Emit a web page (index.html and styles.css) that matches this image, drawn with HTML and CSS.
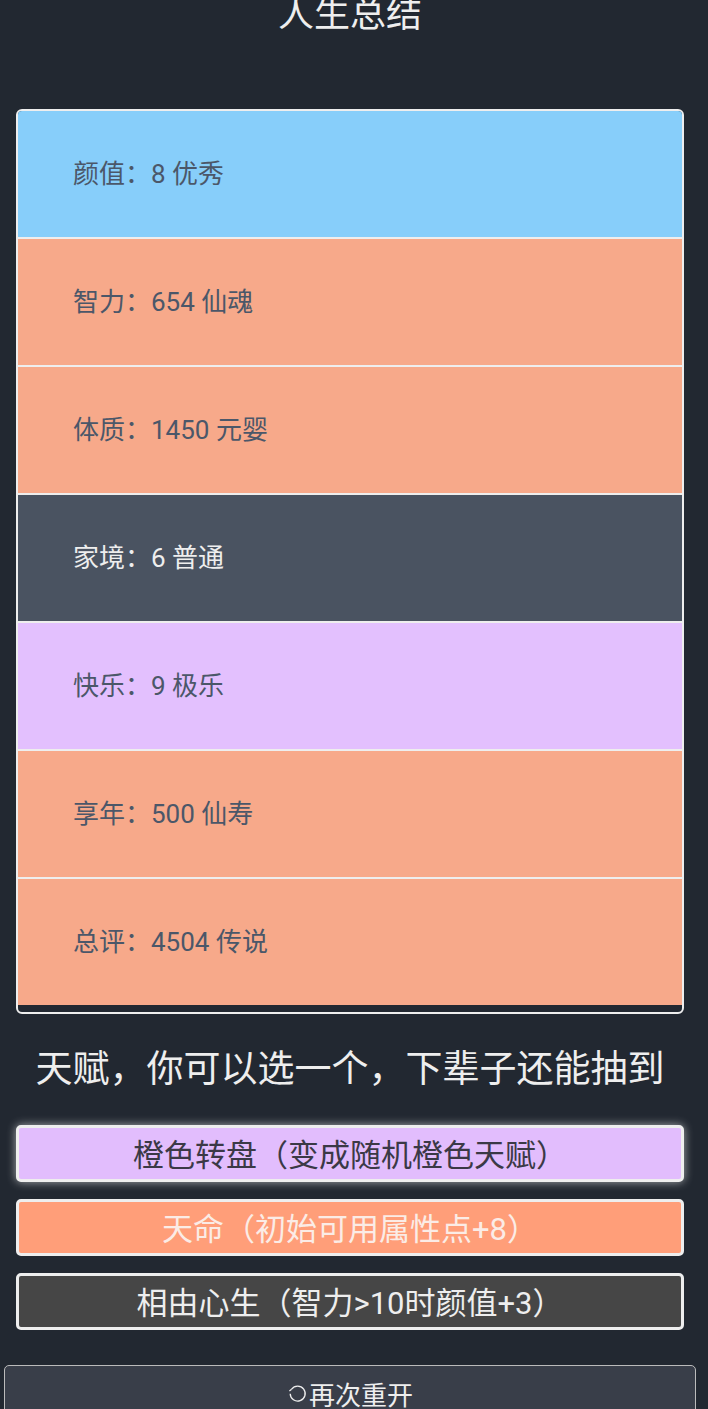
FILE: index.html
```html
<!DOCTYPE html>
<html lang="zh-CN">
<head>
    <meta charset="UTF-8">
    <meta name="viewport" content="width=device-width, initial-scale=1.0">
    <title>人生重开模拟器</title>
    <link rel="stylesheet" href="styles.css">
</head>
<body>
    <div class="page">
        <div class="title">人生总结</div>
        <ul class="summary">
            <li class="grade-blue">颜值：8 优秀</li>
            <li class="grade-orange">智力：654 仙魂</li>
            <li class="grade-orange">体质：1450 元婴</li>
            <li class="grade-gray">家境：6 普通</li>
            <li class="grade-purple">快乐：9 极乐</li>
            <li class="grade-orange">享年：500 仙寿</li>
            <li class="grade-orange">总评：4504 传说</li>
        </ul>
        <div class="talent-head">天赋，你可以选一个，下辈子还能抽到</div>
        <ul class="talents">
            <li class="talent talent-purple selected">橙色转盘（变成随机橙色天赋）</li>
            <li class="talent talent-orange">天命（初始可用属性点+8）</li>
            <li class="talent talent-gray">相由心生（智力&gt;10时颜值+3）</li>
        </ul>
        <button class="restart">
            <svg class="restart-icon" viewBox="0 0 20 20" width="20" height="20">
                <path d="M4.6 6.2 A7.5 7.5 0 1 1 3.2 10.8" fill="none" stroke="#eee" stroke-width="1.3"/>
                <path d="M4.6 6.2 L2.4 8" fill="none" stroke="#eee" stroke-width="1.2"/>
            </svg>再次重开
        </button>
    </div>
</body>
</html>
```

FILE: styles.css
```css
:root {
    --bg: #222831;
    --light: #eeeeee;
    --row-text: #4b5769;
    --blue: #87cefa;
    --orange: #f7a98a;
    --gray: #4a5361;
    --purple: #e3c0fe;
}
html, body {
    margin: 0;
    padding: 0;
    background: var(--bg);
    color: var(--light);
    font-family: Roboto, "Noto Sans CJK SC", sans-serif;
}
.page {
    width: 700px;
    overflow: hidden;
}
.title {
    margin-top: -5px;
    font-size: 36px;
    line-height: 40px;
    text-align: center;
}
.summary {
    list-style: none;
    margin: 74px 16px 0 16px;
    padding: 0 0 7px 0;
    border: 2px solid var(--light);
    border-radius: 6px;
    overflow: hidden;
}
.summary li {
    height: 126px;
    box-sizing: border-box;
    display: flex;
    align-items: center;
    padding: 0 0 5px 55px;
    font-size: 26px;
    color: var(--row-text);
}
.summary li + li {
    height: 128px;
    border-top: 2px solid var(--light);
}
.grade-blue { background: var(--blue); }
.grade-orange { background: var(--orange); }
.grade-gray { background: var(--gray); color: var(--light) !important; }
.grade-purple { background: var(--purple); }
.talent-head {
    margin-top: 31px;
    font-size: 37px;
    line-height: 50px;
    text-align: center;
}
.talents {
    list-style: none;
    margin: 30px 16px 0 16px;
    padding: 0;
    display: flex;
    flex-direction: column;
    gap: 17px;
}
.talent {
    height: 57px;
    box-sizing: border-box;
    border: 3px solid var(--light);
    border-radius: 5px;
    display: flex;
    align-items: center;
    justify-content: center;
    padding-bottom: 3px;
    font-size: 31px;
}
.talent.selected {
    box-shadow: 0 0 10px rgba(255, 255, 255, 0.6);
}
.talent-purple {
    background: #e2bdfd;
    color: #3b3946;
}
.talent-orange {
    background: #ff9e79;
    color: #fbece6;
}
.talent-gray {
    background: #464646;
    color: var(--light);
}
.restart {
    display: flex;
    align-items: center;
    justify-content: center;
    width: 692px;
    height: 56px;
    margin: 35px 4px 0 4px;
    background: #393e49;
    border: 1px solid #bbbbbb;
    border-radius: 5px;
    color: var(--light);
    font-family: inherit;
    font-size: 26px;
}
.restart-icon {
    margin-right: 2px;
}
```
